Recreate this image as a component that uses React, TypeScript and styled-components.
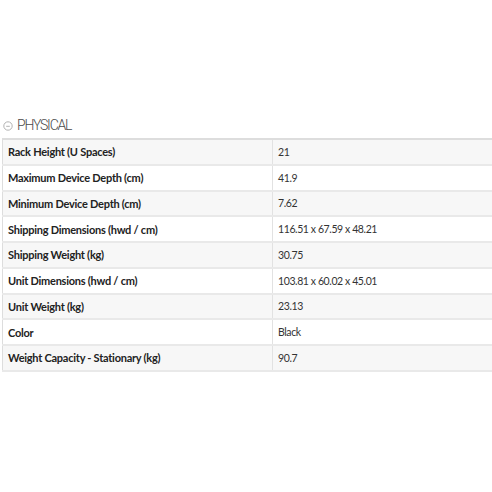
import React from 'react';
import styled, { createGlobalStyle } from 'styled-components';

const specs: [string, string][] = [
    ['Rack Height (U Spaces)', '21'],
    ['Maximum Device Depth (cm)', '41.9'],
    ['Minimum Device Depth (cm)', '7.62'],
    ['Shipping Dimensions (hwd / cm)', '116.51 x 67.59 x 48.21'],
    ['Shipping Weight (kg)', '30.75'],
    ['Unit Dimensions (hwd / cm)', '103.81 x 60.02 x 45.01'],
    ['Unit Weight (kg)', '23.13'],
    ['Color', 'Black'],
    ['Weight Capacity - Stationary (kg)', '90.7'],
];

const App: React.FC = () => {
    return (
        <>
            <GlobalStyle />
            <Page>
                <SectionTitle>
                    <CollapseIcon viewBox="0 0 10 10">
                        <circle cx="5" cy="5" r="4.2" fill="none" stroke="#aaa" strokeWidth="0.9" />
                        <line x1="3.2" y1="5.3" x2="6.8" y2="5.3" stroke="#aaa" strokeWidth="0.9" />
                    </CollapseIcon>
                    PHYSICAL
                </SectionTitle>
                <SpecTable>
                    <tbody>
                        {specs.map(([label, value], i) => (
                            <Row key={label} $shaded={i % 2 === 0}>
                                <Label>{label}</Label>
                                <Value>{value}</Value>
                            </Row>
                        ))}
                    </tbody>
                </SpecTable>
            </Page>
        </>
    );
};

export default App;

const GlobalStyle = createGlobalStyle`
    body {
        margin: 0;
        background: #fff;
        font-family: Lato, "Open Sans", sans-serif;
    }
`;

const Page = styled.div`
    width: 492px;
    height: 492px;
    padding: 114px 0 0 2px;
    box-sizing: border-box;
    overflow: hidden;
`;

const SectionTitle = styled.div`
    display: flex;
    align-items: center;
    gap: 4px;
    height: 22px;
    padding-left: 1px;
    margin-bottom: 2px;
    font-family: Roboto, sans-serif;
    font-size: 14px;
    font-weight: 300;
    color: #4a4a4a;
    letter-spacing: -1.2px;
`;

const CollapseIcon = styled.svg`
    width: 10px;
    height: 10px;
    margin-top: 1px;
`;

const SpecTable = styled.table`
    width: 520px;
    border-collapse: collapse;
    border-top: 2px solid #ddd;
    border-left: 1px solid #ddd;
    border-bottom: 1px solid #ddd;
`;

const Row = styled.tr<{ $shaded: boolean }>`
    height: 25.75px;
    background: ${(p) => (p.$shaded ? '#f7f7f7' : '#fff')};
    border-bottom: 2px solid #e9e9e9;
`;

const Label = styled.td`
    width: 264px;
    padding: 0 0 0 5px;
    font-size: 11px;
    font-weight: 700;
    color: #222;
    letter-spacing: -0.25px;
    border-right: 1px solid #e2e2e2;
`;

const Value = styled.td`
    padding: 0 0 0 5px;
    font-size: 10.5px;
    color: #333;
    letter-spacing: -0.4px;
`;
